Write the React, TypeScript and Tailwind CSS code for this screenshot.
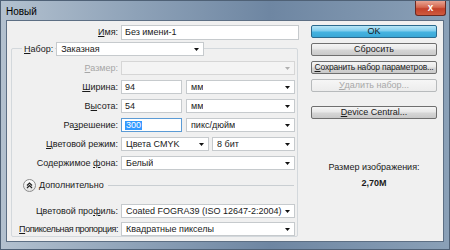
import React from "react";

const FONT = "font-['Liberation_Sans',Arial,sans-serif]";

function U({ children }: { children: React.ReactNode }) {
  return <span className="underline underline-offset-[1px]">{children}</span>;
}

function Arrow({ disabled = false }: { disabled?: boolean }) {
  return (
    <svg width="5" height="3" viewBox="0 0 5 3" className="shrink-0">
      <path d="M0 0h5L2.5 3z" fill={disabled ? "#b0b0b0" : "#111"} />
    </svg>
  );
}

function Select({ value, w, disabled = false }: { value?: string; w: string; disabled?: boolean }) {
  return (
    <div
      className={`h-[14px] ${w} flex items-center justify-between pl-[4px] pr-[4px] border ${
        disabled ? "border-[#d6d6d6] bg-[#f4f4f4]" : "border-[#c6cacd] bg-white"
      }`}
    >
      <span className="truncate whitespace-nowrap">{value}</span>
      <Arrow disabled={disabled} />
    </div>
  );
}

function Input({ value, w, focused = false }: { value: string; w: string; focused?: boolean }) {
  return (
    <div
      className={`h-[14px] ${w} flex items-center pl-[3px] border bg-white ${
        focused ? "border-[#5b9bd5]" : "border-[#c6cacd]"
      }`}
    >
      {focused ? <span className="bg-[#3399ff] text-white px-[1px]">{value}</span> : value}
    </div>
  );
}

function Row({ label, muted = false, children }: { label: React.ReactNode; muted?: boolean; children: React.ReactNode }) {
  return (
    <div className="flex items-center h-[14px]">
      <div
        className={`w-[109px] shrink-0 pr-[3px] flex justify-end whitespace-nowrap ${
          muted ? "text-[#a6a6a6]" : ""
        }`}
      >
        <span>{label}</span>
      </div>
      {children}
    </div>
  );
}

function Btn({ children, kind = "normal" }: { children: React.ReactNode; kind?: "primary" | "normal" | "disabled" }) {
  const look =
    kind === "primary"
      ? "border-[#2b6a8e] bg-[linear-gradient(#b9e6f7,#7fcdee_45%,#45b3e0_55%,#3aa7d6)]"
      : kind === "disabled"
      ? "border-[#b7babc] bg-[linear-gradient(#f6f6f6,#ececec)] text-[#a8a8a8]"
      : "border-[#6f6f6f] bg-[linear-gradient(#f5f5f5,#e8e8e8_45%,#d6d6d6_55%,#c9c9c9)]";
  return (
    <div
      className={`h-[13px] w-[126px] rounded-[2px] border flex items-center justify-center whitespace-nowrap ${look}`}
    >
      {children}
    </div>
  );
}

export default function App() {
  return (
    <div
      className={`${FONT} w-[450px] h-[250px] flex flex-col text-[9px] leading-none text-[#1a1a1a] bg-[linear-gradient(90deg,#b3c1cf,#8ea2b8_30%,#6e86a2_60%,#8aa0b7)] border border-[#4f6176]`}
    >
      {/* Title bar */}
      <div className="h-[19px] flex items-start justify-between shrink-0">
        <span className="pl-[5px] pt-[6px] text-[10px] text-black">Новый</span>
        <div className="mr-[3px] w-[31px] h-[15px] rounded-b-[3px] border border-t-0 border-[#6b2a22] bg-[linear-gradient(#e8a493,#d4674f_45%,#c3412a_55%,#cf5b3f)] flex items-center justify-center">
          <span className="text-white text-[10px] font-bold leading-none">x</span>
        </div>
      </div>

      {/* Client area */}
      <div className="flex-1 mx-[5px] mb-[7px] border border-[#5d6f84] bg-[#f0f0f0] flex">
        {/* Left column */}
        <div className="w-[292px] shrink-0 flex flex-col pt-[4px]">
          <div className="flex items-center h-[15px]">
            <div className="w-[114px] pr-[3px] text-right">
              <U>И</U>мя:
            </div>
            <div className="h-[15px] w-[178px] flex items-center pl-[3px] border border-[#c6cacd] bg-white">
              Без имени-1
            </div>
          </div>

          {/* Preset group */}
          <div className="ml-[4px] mt-[8px] w-[287px] h-[189px] border border-[#d3d8dc] rounded-[2px] flex flex-col gap-[5px]">
            <div className="-mt-[7px] flex items-center h-[14px] pl-[10px]">
              <span className="bg-[#f0f0f0] px-[2px] mr-[1px]">
                <U>Н</U>абор:
              </span>
              <Select value="Заказная" w="w-[148px]" />
            </div>

            <Row
              muted
              label={
                <>
                  <U>Р</U>азмер:
                </>
              }
            >
              <Select w="w-[174px]" disabled />
            </Row>
            <Row
              label={
                <>
                  <U>Ш</U>ирина:
                </>
              }
            >
              <Input value="94" w="w-[61px]" />
              <div className="w-[4px]" />
              <Select value="мм" w="w-[109px]" />
            </Row>
            <Row
              label={
                <>
                  В<U>ы</U>сота:
                </>
              }
            >
              <Input value="54" w="w-[61px]" />
              <div className="w-[4px]" />
              <Select value="мм" w="w-[109px]" />
            </Row>
            <Row
              label={
                <>
                  Ра<U>з</U>решение:
                </>
              }
            >
              <Input value="300" w="w-[61px]" focused />
              <div className="w-[4px]" />
              <Select value="пикс/дюйм" w="w-[109px]" />
            </Row>
            <Row
              label={
                <>
                  <U>Ц</U>ветовой режим:
                </>
              }
            >
              <Select value="Цвета CMYK" w="w-[88px]" />
              <div className="w-[3px]" />
              <Select value="8 бит" w="w-[83px]" />
            </Row>
            <Row
              label={
                <>
                  Содержимое <U>ф</U>она:
                </>
              }
            >
              <Select value="Белый" w="w-[174px]" />
            </Row>

            {/* Advanced */}
            <div className="mt-[4px] h-[13px] flex items-center pl-[11px] pr-[3px]">
              <div className="w-[13px] h-[13px] rounded-full border border-[#8c8c8c] bg-[linear-gradient(#ffffff,#e2e2e2)] flex items-center justify-center">
                <svg width="7" height="7" viewBox="0 0 7 7">
                  <path d="M1 3.5L3.5 1L6 3.5M1 6L3.5 3.5L6 6" fill="none" stroke="#222" strokeWidth="1.2" />
                </svg>
              </div>
              <span className="ml-[3px]">Дополнительно</span>
              <div className="flex-1 ml-[4px] border-t border-[#c9ced2]" />
            </div>

            <div className="mt-[7px] flex flex-col gap-[4px]">
              <Row
                label={
                  <>
                    Цветовой про<U>ф</U>иль:
                  </>
                }
              >
                <Select value="Coated FOGRA39 (ISO 12647-2:2004)" w="w-[174px]" />
              </Row>
              <Row
                label={
                  <span className="tracking-[-0.45px]">
                    <U>П</U>опиксельная пропорция:
                  </span>
                }
              >
                <Select value="Квадратные пикселы" w="w-[174px]" />
              </Row>
            </div>
          </div>
        </div>

        {/* Right column */}
        <div className="ml-[12px] w-[126px] flex flex-col pt-[4px]">
          <div className="flex flex-col gap-[5px]">
            <Btn kind="primary">OK</Btn>
            <Btn>Сбросить</Btn>
            <Btn>
              <span className="text-[8.5px] tracking-[-0.2px]">
                <U>С</U>охранить набор параметров...
              </span>
            </Btn>
            <Btn kind="disabled">
              <U>У</U>далить набор...
            </Btn>
          </div>
          <div className="mt-[14px]">
            <Btn>
              <U>D</U>evice Central...
            </Btn>
          </div>
          <div className="mt-[44px] flex flex-col items-center gap-[7px]">
            <span>Размер изображения:</span>
            <span className="font-bold">2,70M</span>
          </div>
        </div>
      </div>
    </div>
  );
}
